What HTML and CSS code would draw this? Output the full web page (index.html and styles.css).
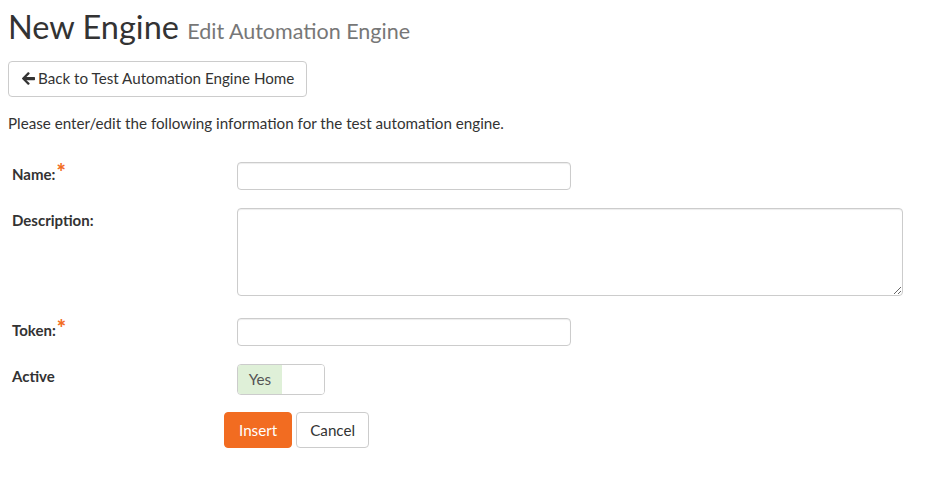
FILE: index.html
```html
<!DOCTYPE html>
<html>
<head>
<meta charset="utf-8">
<link rel="stylesheet" href="styles.css">
</head>
<body>
<div class="page">
  <h1 class="title">New Engine <small>Edit Automation Engine</small></h1>
  <div class="toolbar">
    <button class="btn btn-default back"><svg class="arrow" viewBox="0 0 448 448" width="13" height="13"><path fill="#333" d="M257.5 413.1l-22.2 22.2c-9.4 9.4-24.6 9.4-33.9 0L7 241c-9.4-9.4-9.4-24.6 0-33.9L201.4 12.7c9.4-9.4 24.6-9.4 33.9 0l22.2 22.2c9.5 9.5 9.3 25-.4 34.3L150 168H424c13.3 0 24 10.7 24 24v64c0 13.3-10.7 24-24 24H150l107.1 98.8c9.8 9.3 10 24.8.4 34.3z"/></svg>Back to Test Automation Engine Home</button>
  </div>
  <p class="intro">Please enter/edit the following information for the test automation engine.</p>
  <form class="form">
    <div class="row">
      <label class="label">Name:<span class="req">*</span></label>
      <div class="field"><input type="text" class="input short"></div>
    </div>
    <div class="row row-area">
      <label class="label">Description:</label>
      <div class="field"><textarea class="input area"></textarea></div>
    </div>
    <div class="row">
      <label class="label">Token:<span class="req">*</span></label>
      <div class="field"><input type="text" class="input short"></div>
    </div>
    <div class="row row-toggle">
      <label class="label">Active</label>
      <div class="field"><div class="toggle"><span class="yes">Yes</span><span class="off"></span></div></div>
    </div>
    <div class="actions">
      <button type="button" class="btn btn-primary">Insert</button>
      <button type="button" class="btn btn-default">Cancel</button>
    </div>
  </form>
</div>
</body>
</html>
```
FILE: styles.css
```css
* { box-sizing: border-box; }
html, body { margin: 0; padding: 0; background: #fff; }
body {
  font-family: Lato, "Open Sans", "Liberation Sans", sans-serif;
  font-size: 15.2px;
  color: #333;
  line-height: 1.42857;
}
.page { padding: 9px 8px; }
.title {
  margin: 0;
  font-size: 32.5px;
  font-weight: 400;
  line-height: 1.1;
  color: #333;
}
.title small {
  font-size: 21.5px;
  color: #777;
}
.toolbar { margin-top: 16px; }
.btn {
  font-family: inherit;
  font-size: 15.2px;
  line-height: 1.42857;
  border-radius: 4px;
  border: 1px solid #ccc;
  background: #fff;
  color: #333;
  display: inline-flex;
  align-items: center;
  cursor: pointer;
}
.back { height: 36px; padding: 0 12px 0 13px; }
.arrow { margin-right: 3px; }
.intro { margin: 16px 0 0; }
.form { margin-top: 28px; }
.row {
  display: flex;
  align-items: flex-start;
  margin-bottom: 18px;
}
.row-area { margin-bottom: 22px; }
.row-toggle { margin-bottom: 17px; }
.label {
  width: 229px;
  padding-left: 4px;
  padding-top: 2px;
  font-weight: 700;
  font-size: 15px;
}
.req {
  color: #f26c21;
  font-size: 22px;
  font-weight: 900;
  line-height: 0;
  position: relative;
  top: 0;
  margin-left: 1px;
}
.input {
  display: block;
  border: 1px solid #ccc;
  border-radius: 4px;
  font-family: inherit;
  font-size: 14px;
  box-shadow: inset 0 1px 1px rgba(0,0,0,0.075);
}
.short { width: 334px; height: 28px; }
.area { width: 666px; height: 88px; resize: both; }
.toggle {
  display: flex;
  width: 88px;
  height: 31px;
  border: 1px solid #ccc;
  border-radius: 4px;
  overflow: hidden;
}
.yes {
  width: 44px;
  background: #dff0d8;
  color: #555;
  display: flex;
  align-items: center;
  justify-content: center;
  font-size: 15.2px;
}
.off { flex: 1; background: #fff; }
.actions {
  display: flex;
  gap: 4px;
  padding-left: 216px;
}
.actions .btn { height: 36px; padding: 0 13px; }
.actions .btn-primary { padding: 0 14px; }
.btn-primary {
  background: #f26c21;
  border-color: #f26c21;
  color: #fff;
}
```
